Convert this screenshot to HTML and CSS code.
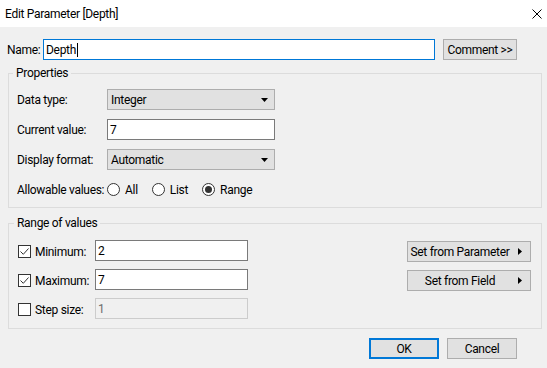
FILE: index.html
```html
<!DOCTYPE html>
<html lang="en">
<head>
	<meta charset="UTF-8">
	<title>Edit Parameter [Depth]</title>
	<link rel="stylesheet" href="styles.css">
</head>
<body>
	<div class="titlebar">
		<span class="title">Edit Parameter [Depth]</span>
		<svg class="close" width="10" height="10" viewBox="0 0 10 10">
			<path d="M0.5 0.5 L9.5 9.5 M9.5 0.5 L0.5 9.5" stroke="#000" stroke-width="1" fill="none"/>
		</svg>
	</div>
	<div class="content">
		<div class="name-row">
			<span class="name-label">Name:</span>
			<div class="field name-field focused">Depth<span class="caret"></span></div>
			<button class="btn comment">Comment &gt;&gt;</button>
		</div>

		<div class="group">
			<div class="group-title">Properties</div>
			<div class="prop-grid">
				<span class="lbl">Data type:</span>
				<div class="combo">Integer<svg width="7" height="4" viewBox="0 0 7 4"><path d="M0 0 H7 L3.5 4 Z" fill="#000"/></svg></div>
				<span class="lbl">Current value:</span>
				<div class="field">7</div>
				<span class="lbl">Display format:</span>
				<div class="combo">Automatic<svg width="7" height="4" viewBox="0 0 7 4"><path d="M0 0 H7 L3.5 4 Z" fill="#000"/></svg></div>
				<span class="lbl">Allowable values:</span>
				<div class="radios">
					<label class="radio"><span class="dot"></span>All</label>
					<label class="radio"><span class="dot"></span>List</label>
					<label class="radio"><span class="dot on"></span>Range</label>
				</div>
			</div>
		</div>

		<div class="group range">
			<div class="group-title">Range of values</div>
			<div class="range-body">
				<div class="range-grid">
					<label class="check"><span class="box"><svg width="11" height="11" viewBox="0 0 11 11"><path d="M1.5 5.5 L4.3 8.3 L9.5 2.5" stroke="#333" stroke-width="1" fill="none"/></svg></span>Minimum:</label>
					<div class="field">2</div>
					<label class="check"><span class="box"><svg width="11" height="11" viewBox="0 0 11 11"><path d="M1.5 5.5 L4.3 8.3 L9.5 2.5" stroke="#333" stroke-width="1" fill="none"/></svg></span>Maximum:</label>
					<div class="field">7</div>
					<label class="check"><span class="box"></span>Step size:</label>
					<div class="field disabled">1</div>
				</div>
				<div class="set-btns">
					<button class="btn set">Set from Parameter<svg width="4" height="7" viewBox="0 0 4 7"><path d="M0 0 L4 3.5 L0 7 Z" fill="#000"/></svg></button>
					<button class="btn set">Set from Field<svg width="4" height="7" viewBox="0 0 4 7"><path d="M0 0 L4 3.5 L0 7 Z" fill="#000"/></svg></button>
				</div>
			</div>
		</div>

		<div class="footer">
			<button class="btn ok">OK</button>
			<button class="btn">Cancel</button>
		</div>
	</div>
</body>
</html>
```

FILE: styles.css
```css
*{
	margin:0;
	padding:0;
	box-sizing:border-box;
}
body{
	width:547px;
	height:368px;
	background:#f0f0f0;
	font-family:Roboto,"Liberation Sans",sans-serif;
	font-size:12px;
	letter-spacing:-0.3px;
	color:#000;
	white-space:nowrap;
	overflow:hidden;
}
.titlebar{
	height:27px;
	background:#fff;
	display:flex;
	align-items:center;
	padding:0 5px;
}
.close{
	margin-left:auto;
}
.content{
	padding:12px 5px 0 8px;
}
.name-row{
	display:flex;
	align-items:center;
	height:21px;
	margin-left:-1px;
}
.name-label{
	width:36px;
	flex-shrink:0;
}
.field{
	height:21px;
	background:#fff;
	border:1px solid #7a7a7a;
	padding:0 2px;
	display:flex;
	align-items:center;
	line-height:16px;
}
.name-field{
	width:392px;
	flex-shrink:0;
}
.focused{
	border-color:#0078d7;
}
.caret{
	display:inline-block;
	width:1px;
	height:14px;
	background:#000;
	margin-left:1px;
}
.btn{
	font:inherit;
	letter-spacing:inherit;
	color:#000;
	background:#e1e1e1;
	border:1px solid #adadad;
	height:21px;
	white-space:nowrap;
}
.comment{
	width:74px;
	flex-shrink:0;
	margin-left:8px;
}
.group{
	border:1px solid #dcdcdc;
	margin-top:13px;
	padding:0 8px 7px 8px;
}
.group-title{
	width:fit-content;
	line-height:16px;
	margin:-9px 0 0 -4px;
	padding:0 3px;
	background:#f0f0f0;
}
.prop-grid{
	display:grid;
	grid-template-columns:90px 168px;
	grid-auto-rows:21px;
	row-gap:9px;
	margin-top:8px;
	align-items:center;
}
.combo{
	height:21px;
	background:#e1e1e1;
	border:1px solid #adadad;
	padding:0 6px 0 3px;
	display:flex;
	align-items:center;
	justify-content:space-between;
}
.radios{
	display:flex;
	gap:14px;
	align-items:center;
}
.radio{
	display:flex;
	align-items:center;
	gap:5px;
}
.dot{
	width:13px;
	height:13px;
	border:1px solid #333;
	border-radius:50%;
	background:#fff;
	display:flex;
	align-items:center;
	justify-content:center;
}
.dot.on::after{
	content:"";
	width:7px;
	height:7px;
	border-radius:50%;
	background:#333;
}
.range{
	margin-top:15px;
	padding:0 10px 9px 9px;
}
.range-body{
	display:flex;
	justify-content:space-between;
	margin-top:9px;
}
.range-grid{
	display:grid;
	grid-template-columns:77px 153px;
	grid-auto-rows:21px;
	row-gap:8px;
	align-items:center;
}
.check{
	display:flex;
	align-items:center;
	gap:4px;
	margin-top:2px;
}
.box{
	width:13px;
	height:13px;
	border:1px solid #333;
	background:#fff;
	display:flex;
	flex-shrink:0;
}
.field.disabled{
	background:#f0f0f0;
	border-color:#ccc;
	color:#6d6d6d;
}
.set-btns{
	display:flex;
	flex-direction:column;
	gap:8px;
	margin-top:1px;
}
.set{
	width:124px;
	display:flex;
	align-items:center;
	justify-content:center;
	position:relative;
	padding-right:18px;
}
.set svg{
	position:absolute;
	right:8px;
	top:6px;
}
.footer{
	display:flex;
	justify-content:flex-end;
	gap:8px;
	margin:9px 25px 0 0;
}
.footer .btn{
	width:70px;
}
.ok{
	border:2px solid #0078d7;
}
```
